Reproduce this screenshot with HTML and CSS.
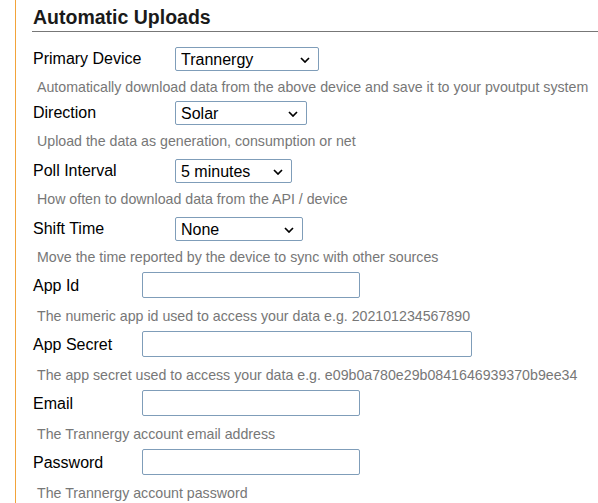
FILE: index.html
```html
<!DOCTYPE html>
<html>
<head>
<meta charset="utf-8">
<title>Automatic Uploads</title>
<link rel="stylesheet" href="styles.css">
</head>
<body>
<div class="panel">
  <h2 class="title">Automatic Uploads</h2>

  <div class="field sel gap-first">
    <div class="row">
      <label class="lbl lbl-sel">Primary Device</label>
      <span class="sel-wrap w-primary">
        <select class="select"><option>Trannergy</option></select>
        <svg class="chev" viewBox="0 0 10 6" width="10" height="6"><path d="M1 1 L5 5 L9 1" fill="none" stroke="#000" stroke-width="1.7"/></svg>
      </span>
    </div>
    <div class="help">Automatically download data from the above device and save it to your pvoutput system</div>
  </div>

  <div class="field sel">
    <div class="row">
      <label class="lbl lbl-sel">Direction</label>
      <span class="sel-wrap w-direction">
        <select class="select"><option>Solar</option></select>
        <svg class="chev" viewBox="0 0 10 6" width="10" height="6"><path d="M1 1 L5 5 L9 1" fill="none" stroke="#000" stroke-width="1.7"/></svg>
      </span>
    </div>
    <div class="help">Upload the data as generation, consumption or net</div>
  </div>

  <div class="field sel">
    <div class="row">
      <label class="lbl lbl-sel">Poll Interval</label>
      <span class="sel-wrap w-poll">
        <select class="select"><option>5 minutes</option></select>
        <svg class="chev" viewBox="0 0 10 6" width="10" height="6"><path d="M1 1 L5 5 L9 1" fill="none" stroke="#000" stroke-width="1.7"/></svg>
      </span>
    </div>
    <div class="help">How often to download data from the API / device</div>
  </div>

  <div class="field sel gap-mid">
    <div class="row">
      <label class="lbl lbl-sel">Shift Time</label>
      <span class="sel-wrap w-shift">
        <select class="select"><option>None</option></select>
        <svg class="chev" viewBox="0 0 10 6" width="10" height="6"><path d="M1 1 L5 5 L9 1" fill="none" stroke="#000" stroke-width="1.7"/></svg>
      </span>
    </div>
    <div class="help">Move the time reported by the device to sync with other sources</div>
  </div>

  <div class="field txt">
    <div class="row">
      <label class="lbl lbl-txt">App Id</label>
      <input class="input w-std" type="text">
    </div>
    <div class="help">The numeric app id used to access your data e.g. 202101234567890</div>
  </div>

  <div class="field txt">
    <div class="row">
      <label class="lbl lbl-txt">App Secret</label>
      <input class="input w-wide" type="text">
    </div>
    <div class="help">The app secret used to access your data e.g. e09b0a780e29b0841646939370b9ee34</div>
  </div>

  <div class="field txt">
    <div class="row">
      <label class="lbl lbl-txt">Email</label>
      <input class="input w-std" type="text">
    </div>
    <div class="help">The Trannergy account email address</div>
  </div>

  <div class="field txt">
    <div class="row">
      <label class="lbl lbl-txt">Password</label>
      <input class="input w-std" type="password">
    </div>
    <div class="help">The Trannergy account password</div>
  </div>
</div>
</body>
</html>
```

FILE: styles.css
```css
html, body {
  margin: 0;
  padding: 0;
  background: #fff;
}

body {
  font-family: "Liberation Sans", Arial, sans-serif;
  color: #000;
}

.panel {
  margin-left: 15px;
  border-left: 1px solid #f2a33a;
  min-height: 503px;
}

.title {
  margin: 0 0 14px 16px;
  padding: 5px 0 2px 1px;
  font-size: 19.5px;
  line-height: 24px;
  font-weight: bold;
  color: #1a1a1a;
  border-bottom: 1px solid #777;
}

.field {
  padding-left: 17px;
}

.row {
  display: flex;
  align-items: flex-start;
  height: 26px;
}

.lbl {
  font-size: 16px;
  line-height: 18px;
  flex: none;
}

.lbl-sel {
  width: 142px;
  padding-top: 4px;
}

.lbl-txt {
  width: 109px;
  padding-top: 5px;
}

.sel-wrap {
  position: relative;
  display: block;
  margin-top: 1px;
  height: 24px;
}

.select {
  appearance: none;
  -webkit-appearance: none;
  display: block;
  box-sizing: border-box;
  width: 100%;
  height: 24px;
  margin: 0;
  padding: 3px 20px 1px 5px;
  font-family: "Liberation Sans", Arial, sans-serif;
  font-size: 16px;
  line-height: 18px;
  color: #000;
  background: #fff;
  border: 1px solid #7f9db9;
  border-radius: 2px;
  outline: none;
}

.chev {
  position: absolute;
  right: 9px;
  top: 10px;
  pointer-events: none;
}

.w-primary { width: 144px; }
.w-direction { width: 132px; }
.w-poll { width: 117px; }
.w-shift { width: 128px; }

.input {
  display: block;
  box-sizing: border-box;
  height: 26px;
  margin: 0;
  padding: 2px 4px;
  font-family: "Liberation Sans", Arial, sans-serif;
  font-size: 16px;
  border: 1px solid #7f9db9;
  border-radius: 2px;
  background: #fff;
  outline: none;
}

.w-std { width: 218px; }
.w-wide { width: 330px; }

.help {
  padding-left: 4px;
  font-size: 14.2px;
  line-height: 16px;
  color: #777;
  white-space: nowrap;
}

.sel .help {
  padding-top: 7px;
  padding-bottom: 9px;
}

.gap-first .help {
  padding-bottom: 5px;
}

.gap-mid .help {
  padding-bottom: 7px;
}

.txt .help {
  padding-top: 10px;
  padding-bottom: 7px;
}
```
